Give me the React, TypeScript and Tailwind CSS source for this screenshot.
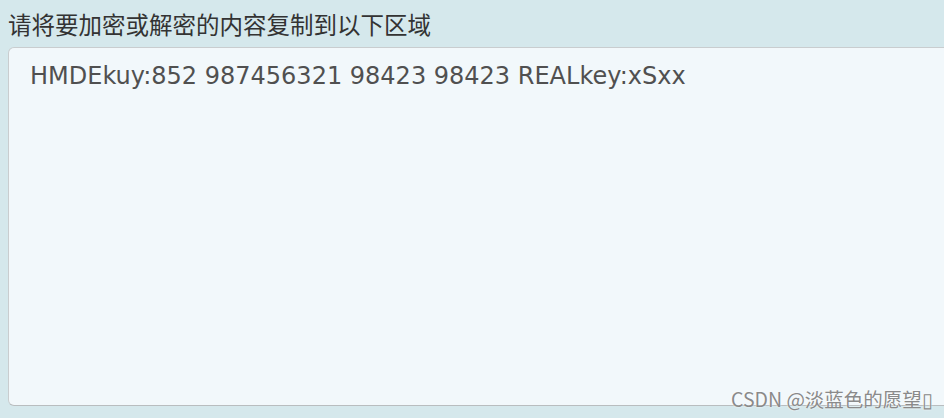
export default function App() {
  return (
    <div className="relative h-[418px] w-[944px] overflow-hidden bg-[#d5e8ec]">
      <div className="flex flex-col pl-2 pt-[8px]">
        {/* Label */}
        <label className="h-[39px] text-[23.5px] leading-[32px] text-[#333] [font-family:'Noto_Sans_CJK_SC',sans-serif]">
          请将要加密或解密的内容复制到以下区域
        </label>

        {/* Text area */}
        <div className="h-[359px] w-[960px] rounded-[6px] border border-[#c9cdcf] border-b-[#b9bdbf] bg-[#f2f8fb] pl-[21px] pt-[12px]">
          <p className="text-[24px] leading-[32px] text-[#505050] [font-family:'DejaVu_Sans',Verdana,sans-serif]">
            HMDEkuy:852 987456321 98423 98423 REALkey:xSxx
          </p>
        </div>
      </div>

      {/* Watermark */}
      <span className="absolute left-[731px] top-[385px] text-[19.5px] leading-[28px] text-[#8a8a8a] [font-family:'Noto_Sans_CJK_SC',sans-serif] [text-shadow:0_0_2px_#ffffff]">
        CSDN @淡蓝色的愿望▯
      </span>
    </div>
  );
}
